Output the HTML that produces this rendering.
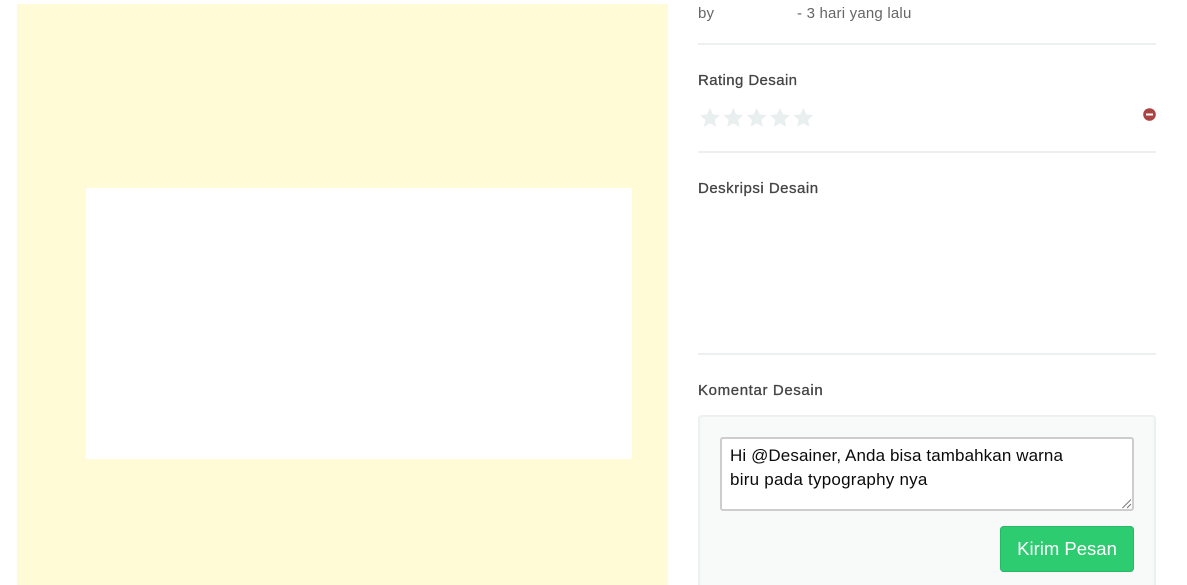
<!DOCTYPE html>
<html>
<head>
<meta charset="utf-8">
<style>
html,body{margin:0;padding:0;background:#fff;width:1187px;height:585px;overflow:hidden}
body{position:relative;font-family:"Liberation Sans",sans-serif}
div,svg{position:absolute}
.t{white-space:nowrap}
.hr{left:698px;width:458px;height:2px;background:#ecf0f1}
.h{left:698px;font-size:15px;font-weight:400;color:#444;line-height:20px;-webkit-text-stroke:.3px #444}
.m{font-size:15px;line-height:20px;color:#666;letter-spacing:.2px}
</style>
</head>
<body>
<div style="left:17px;top:4px;width:651px;height:581px;background:#fffbd6"></div>
<div style="left:86px;top:188px;width:546px;height:271px;background:#fff"></div>

<div class="t m" style="left:698px;top:4px">by</div>
<div class="t m" style="left:797px;top:4px">- 3 hari yang lalu</div>
<div class="hr" style="top:43px"></div>

<div class="t h" style="top:71px;letter-spacing:.4px">Rating Desain</div>
<svg style="left:698px;top:106px" width="118" height="23" viewBox="0 0 118 23">
<g fill="#e9eeef">
<path d="M12 2l2.900 6.400 6.900.8-5.100 4.700 1.400 6.900L12 17.300l-6.100 3.500 1.400-6.900-5.100-4.700 6.900-.8z"/>
<path d="M35.300 2l2.900 6.400 6.900.8-5.100 4.700 1.400 6.900-6.100-3.500-6.100 3.500 1.400-6.900-5.100-4.700 6.900-.8z"/>
<path d="M58.700 2l2.900 6.400 6.900.8-5.100 4.700 1.400 6.900-6.100-3.500-6.100 3.500 1.400-6.900-5.100-4.700 6.900-.8z"/>
<path d="M82 2l2.900 6.400 6.900.8-5.100 4.700 1.400 6.900L82 17.300l-6.100 3.500 1.400-6.900-5.100-4.700 6.900-.8z"/>
<path d="M105.300 2l2.900 6.400 6.900.8-5.100 4.700 1.400 6.900-6.100-3.500-6.100 3.500 1.400-6.900-5.100-4.700 6.900-.8z"/>
</g>
</svg>
<svg style="left:1143px;top:108px" width="13" height="13" viewBox="0 0 13 13">
<circle cx="6.500" cy="6.500" r="6.300" fill="#a94442"/>
<rect x="3" y="5.500" width="7" height="2" fill="#fff"/>
</svg>
<div class="hr" style="top:151px"></div>

<div class="t h" style="top:179px;letter-spacing:.5px">Deskripsi Desain</div>
<div class="hr" style="top:353px"></div>

<div class="t h" style="top:381px;letter-spacing:.63px">Komentar Desain</div>
<div style="left:698px;top:415px;width:454px;height:175px;background:#f8f9f9;border:2px solid #ecf0f1;border-radius:4px"></div>
<div style="left:720px;top:437px;width:410px;height:70px;background:#fff;border:2px solid #cdcdcd;border-radius:3px"></div>
<div class="t" style="left:730px;top:444px;font-size:17px;line-height:24px;color:#0a0a0a;letter-spacing:.1px">Hi @Desainer, Anda bisa tambahkan warna<br><span style="letter-spacing:.24px">biru pada typography nya</span></div>
<svg style="left:1121px;top:498px" width="11" height="11" viewBox="0 0 11 11">
<path d="M1.500 10L10 1.500M6 10l4-4" stroke="#777" stroke-width="1" fill="none"/>
</svg>

<div style="left:1000px;top:526px;width:134px;height:46px;background:#2ecc71;border-radius:4px;box-shadow:inset 0 0 0 1px #29b866"></div>
<div class="t" style="left:1000px;top:526px;width:134px;height:46px;line-height:46px;text-align:center;color:#fff;font-size:18.500px">Kirim Pesan</div>
</body>
</html>
